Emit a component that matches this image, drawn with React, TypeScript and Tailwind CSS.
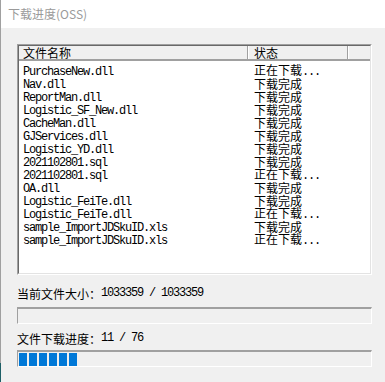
import React from "react";

const rows: [string, boolean][] = [
  ["PurchaseNew.dll", false],
  ["Nav.dll", true],
  ["ReportMan.dll", true],
  ["Logistic_SF_New.dll", true],
  ["CacheMan.dll", true],
  ["GJServices.dll", true],
  ["Logistic_YD.dll", true],
  ["2021102801.sql", true],
  ["2021102801.sql", false],
  ["OA.dll", true],
  ["Logistic_FeiTe.dll", true],
  ["Logistic_FeiTe.dll", false],
  ["sample_ImportJDSkuID.xls", true],
  ["sample_ImportJDSkuID.xls", false],
];

function M({ children }: { children: React.ReactNode }) {
  return (
    <span className="font-['Liberation_Mono',monospace] text-[12px] leading-[13px] tracking-[-1.2px]">
      {children}
    </span>
  );
}

function C({ children }: { children: React.ReactNode }) {
  return (
    <span className="font-['Noto_Sans_CJK_SC',sans-serif] text-[12px] leading-[13px]">{children}</span>
  );
}

function Status({ done }: { done: boolean }) {
  if (done) return <C>下载完成</C>;
  return (
    <>
      <C>正在下载</C>
      <M>...</M>
    </>
  );
}

export default function App() {
  return (
    <div className="flex w-[385px] h-[382px] overflow-hidden bg-[#f0f0f0]">
      <div className="flex flex-col w-[1px] shrink-0">
        <div className="h-[363px] bg-[#a0a0a0]" />
        <div className="flex-1 bg-[#1d5f66]" />
      </div>
      <div className="flex flex-col flex-1">
        <div className="h-[28px] bg-white flex items-center pl-[7px] shrink-0">
          <span className="font-['Noto_Sans_CJK_SC',sans-serif] text-[12px] text-[#9a9a9a] leading-none">
            下载进度(OSS)
          </span>
        </div>
        <div className="flex flex-col pl-[16px] pt-[16px]">
          {/* list view */}
          <div className="w-[355px] h-[231px] border-t border-l border-[#a0a0a0] border-r-white border-b-white border-r border-b flex">
            <div className="flex-1 flex flex-col border-t border-l border-[#696969] border-r border-b border-r-[#e3e3e3] border-b-[#e3e3e3] bg-white">
              <div className="flex h-[15px] bg-[#f0f0f0] border-b-2 border-[#a0a0a0] text-black leading-[13px] shrink-0">
                <div className="w-[229px] border-r border-[#a0a0a0] pl-[4px] flex items-center">
                  <C>文件名称</C>
                </div>
                <div className="w-[100px] border-l border-white border-r border-r-[#a0a0a0] pl-[5px] flex items-center">
                  <C>状态</C>
                </div>
                <div className="flex-1 border-l border-white" />
              </div>
              <div className="flex flex-col pt-[3px] text-black">
                {rows.map(([name, done], i) => (
                  <div key={i} className="flex h-[13px] leading-[13px] items-center">
                    <div className="w-[229px] pl-[4px] whitespace-nowrap">
                      <M>{name}</M>
                    </div>
                    <div className="pl-[6px] whitespace-nowrap">
                      <Status done={done} />
                    </div>
                  </div>
                ))}
              </div>
            </div>
          </div>

          <div className="mt-[12px] h-[13px] leading-[13px] flex items-center text-black whitespace-nowrap">
            <C>当前文件大小：</C>
            <M>{" 1033359 / 1033359"}</M>
          </div>
          <div className="mt-[7px] w-[355px] h-[17px] border-t-2 border-l border-[#a0a0a0] border-r border-b border-r-white border-b-white" />

          <div className="mt-[8px] h-[13px] leading-[13px] flex items-center text-black whitespace-nowrap">
            <C>文件下载进度：</C>
            <M>{" 11 / 76"}</M>
          </div>
          <div className="mt-[5px] w-[355px] h-[17px] border-t-2 border-l border-[#a0a0a0] border-r border-b border-r-white border-b-white flex gap-[2px] pl-[1px] pt-[1px] pb-[1px]">
            {[0, 1, 2, 3, 4, 5].map((i) => (
              <div key={i} className="w-[8px] h-[13px] bg-[#0078d7]" />
            ))}
          </div>
        </div>
      </div>
    </div>
  );
}
